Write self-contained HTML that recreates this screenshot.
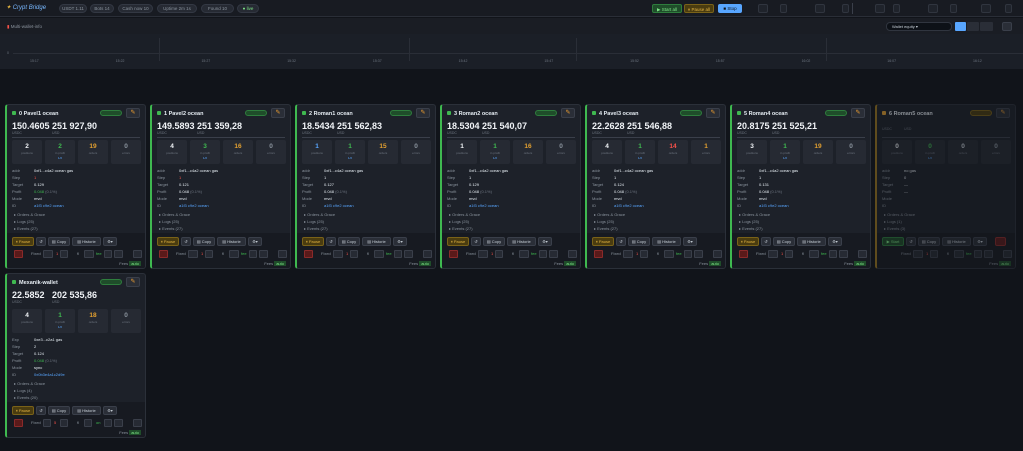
<!DOCTYPE html>
<html><head><meta charset="utf-8"><style>
*{box-sizing:border-box;margin:0;padding:0}
body{width:1023px;height:451px;background:#11141a;font-family:"Liberation Sans",sans-serif;color:#c9d1d9;position:relative;overflow:hidden;font-size:5px}
.top{position:absolute;left:0;top:0;width:1023px;height:17px;background:#181b22;border-bottom:1px solid #2a2e37}
.abs{position:absolute}
.pill{position:absolute;top:4px;height:9px;border-radius:5px;background:#262a33;border:1px solid #333843;color:#8b949e;font-size:4.5px;line-height:7px;text-align:center}
.tb{position:absolute;top:4px;height:9px;border-radius:2px;font-size:4.5px;line-height:9px;text-align:center}
.inp{position:absolute;top:4px;height:9px;background:#1f232b;border:1px solid #30353f;border-radius:2px}
.bar2{position:absolute;left:0;top:18px;width:1023px;height:16px;background:#1a1d24}
.chart{position:absolute;left:0;top:34px;width:1023px;height:35px;background:#1b1f27}
.card{position:absolute;width:141px;height:165px;background:#1d2129;border:1px solid #2b3039;border-left:2px solid #3fb950;border-radius:3px;overflow:hidden}
.card.off{border-left-color:#a07a20;opacity:.55}
.hd{position:absolute;left:5px;top:6px;font-size:5.5px;color:#e6edf3;font-weight:bold}
.hd i{display:inline-block;width:4px;height:4px;background:#3fb950;border-radius:1px;margin-right:3px}
.badge{position:absolute;right:23px;top:5px;width:22px;height:6px;border-radius:3px;background:#1f4d2a;border:1px solid #2e7d3d}
.edit{position:absolute;right:5px;top:3px;width:14px;height:10px;background:#2a2e37;border:1px solid #3a3f4a;border-radius:2px;color:#f0a030;font-size:6px;line-height:9px;text-align:center}
.big{position:absolute;top:16px;font-size:9px;font-weight:bold;color:#f0f3f6}
.lbl{position:absolute;top:26px;font-size:3.5px;color:#6e7681}
.div{position:absolute;left:5px;right:5px;top:32px;height:1px;background:#3a3f4a}
.st{position:absolute;top:35px;width:30px;height:24px;background:#262a33;border-radius:2px;text-align:center}
.st b{display:block;font-size:6.5px;margin-top:3px}
.st s{display:block;text-decoration:none;font-size:3px;color:#6e7681;margin-top:1px}
.st u{display:block;text-decoration:none;font-size:3px;color:#58a6ff;margin-top:1px}
.inf{position:absolute;left:5px;font-size:4px;color:#8b949e;line-height:7px}
.inf span{position:absolute;left:22px;white-space:nowrap}
.det{position:absolute;left:7px;font-size:4px;color:#8b949e}
.bot{position:absolute;left:0;right:0;top:128px;bottom:0;background:#171a21}
.bt{position:absolute;top:4px;height:9px;background:#2a2e37;border:1px solid #3a3f4a;border-radius:2px;font-size:4px;line-height:7px;text-align:center;color:#c9d1d9}
.bt.y{background:#4a3c10;border-color:#7a6218;color:#e3b341}
.bt.g{background:#1f4d2a;border-color:#2e7d3d;color:#7ee787}
.bt.r{background:#5a1a1a;border-color:#8a2a2a}
.cr{position:absolute;top:17px;height:8px;background:#262a33;border:1px solid #3a3f4a;border-radius:1px}
.ct{position:absolute;top:18px;font-size:4px;color:#8b949e}
.fee{position:absolute;right:4px;top:28px;font-size:4px;color:#8b949e}
.fee b{background:#1f4d2a;color:#7ee787;padding:0 2px;font-weight:normal}
</style></head><body>
<div class="top">
<div class="abs" style="left:6px;top:4px;font-size:6px;color:#79b8ff;font-style:italic"><span style="color:#e3b341">✦</span> Crypt Bridge</div>
<div class="pill" style="left:59px;width:28px">USDT 1.11</div>
<div class="pill" style="left:90px;width:24px">Bots 14</div>
<div class="pill" style="left:118px;width:35px">Cash now 10</div>
<div class="pill" style="left:157px;width:40px">Uptime 2m 1s</div>
<div class="pill" style="left:201px;width:33px">Found 10</div>
<div class="pill" style="left:237px;width:22px;color:#7ee787">● live</div>
<div class="tb" style="left:652px;width:30px;background:#1f4d2a;border:1px solid #2e7d3d;color:#7ee787">▶ Start all</div>
<div class="tb" style="left:684px;width:30px;background:#4a3c10;border:1px solid #7a6218;color:#e3b341">⏸ Pause all</div>
<div class="tb" style="left:718px;width:24px;background:#58a6ff;color:#0d1117">■ Stop</div>
<div class="inp" style="left:758px;width:10px"></div><div class="inp" style="left:780px;width:7px"></div>
<div class="inp" style="left:815px;width:10px"></div><div class="inp" style="left:842px;width:7px"></div>
<div class="abs" style="left:852px;top:3px;width:1px;height:11px;background:#3a3f4a"></div>
<div class="inp" style="left:875px;width:10px"></div><div class="inp" style="left:893px;width:7px"></div>
<div class="inp" style="left:928px;width:10px"></div><div class="inp" style="left:950px;width:7px"></div>
<div class="inp" style="left:981px;width:10px"></div><div class="inp" style="left:1005px;width:7px"></div>
</div>
<div class="bar2">
<div class="abs" style="left:7px;top:6px;font-size:4.5px;color:#8b949e"><span style="color:#f85149">▮</span> Multi-wallet-info</div>
<div class="abs" style="left:886px;top:4px;width:66px;height:9px;background:#0d1117;border:1px solid #30353f;border-radius:4px;font-size:4px;color:#c9d1d9;line-height:7px;padding-left:5px">Wallet equity ▾</div>
<div class="abs" style="left:955px;top:4px;width:11px;height:9px;background:#58a6ff;border-radius:1px"></div>
<div class="abs" style="left:967px;top:4px;width:12px;height:9px;background:#2a2e37;border-radius:1px"></div>
<div class="abs" style="left:980px;top:4px;width:13px;height:9px;background:#2a2e37;border-radius:1px"></div>
<div class="abs" style="left:1002px;top:4px;width:10px;height:9px;background:#2a2e37;border:1px solid #3a3f4a;border-radius:2px"></div>
</div>
<div class="chart">
<div class="abs" style="left:13px;top:19px;width:1010px;height:1px;background:#2a2e37"></div>
<div class="abs" style="left:159px;top:4px;width:1px;height:23px;background:#2a2e37"></div>
<div class="abs" style="left:409px;top:4px;width:1px;height:23px;background:#2a2e37"></div>
<div class="abs" style="left:576px;top:4px;width:1px;height:23px;background:#2a2e37"></div>
<div class="abs" style="left:826px;top:4px;width:1px;height:23px;background:#2a2e37"></div>
<div class="abs" style="left:7px;top:17px;font-size:3.5px;color:#6e7681">0</div>
<div class="abs" style="left:30px;top:25px;width:1000px;font-size:3.5px;color:#6e7681;word-spacing:76px">15:17 15:22 15:27 15:32 15:37 15:42 15:47 15:52 15:57 16:02 16:07 16:12</div>
</div>

<!-- cards -->
<div class="card" style="left:5px;top:104px">
<div class="hd"><i></i>0 Pavel1 ocean</div><div class="badge"></div><div class="edit">✎</div>
<div class="big" style="left:5px">150.4605</div><div class="big" style="left:45px">251 927,90</div>
<div class="lbl" style="left:5px">USDC</div><div class="lbl" style="left:45px">USD</div><div class="div"></div>
<div class="st" style="left:5px"><b style="color:#f0f3f6">2</b><s>positions</s></div>
<div class="st" style="left:38px"><b style="color:#3fb950">2</b><s>in profit</s><u>1/2</u></div>
<div class="st" style="left:71px"><b style="color:#e3a030">19</b><s>orders</s></div>
<div class="st" style="left:104px"><b style="color:#8b949e">0</b><s>errors</s></div>
<div class="inf" style="top:62px">addr<span style="color:#e6edf3">0xf1...c4a2 ocean gas</span></div>
<div class="inf" style="top:69px">Step<span style="color:#f85149">1</span></div>
<div class="inf" style="top:76px">Target<span style="color:#e6edf3">0.129</span></div>
<div class="inf" style="top:83px">Profit<span style="color:#3fb950">0.048 <font color="#6e7681">(0.1%)</font></span></div>
<div class="inf" style="top:90px">Mode<span style="color:#e6edf3">mvd</span></div>
<div class="inf" style="top:97px">ID<span style="color:#58a6ff">a1f3 c9e2 ocean</span></div>
<div class="det" style="top:107px">▸ Orders &amp; Grace</div><div class="det" style="top:114px">▸ Logs (25)</div><div class="det" style="top:121px">▸ Events (27)</div>
<div class="bot"><div class="bt y" style="left:5px;width:22px">⏸ Pause</div><div class="bt" style="left:29px;width:10px">↺</div><div class="bt" style="left:41px;width:22px">▤ Copy</div><div class="bt" style="left:65px;width:29px">▤ Historie</div><div class="bt" style="left:96px;width:14px">⚙▾</div>
<div class="cr" style="left:7px;width:9px;background:#5a1a1a;border-color:#8a2a2a"></div><div class="ct" style="left:24px">Fixed</div><div class="cr" style="left:36px;width:10px"></div><div class="ct" style="left:49px;color:#f85149">1</div><div class="cr" style="left:53px;width:8px"></div><div class="ct" style="left:70px">fl</div><div class="cr" style="left:77px;width:10px"></div><div class="ct" style="left:89px;color:#3fb950">fee</div><div class="cr" style="left:97px;width:8px"></div><div class="cr" style="left:107px;width:9px"></div><div class="cr" style="left:126px;width:9px"></div>
<div class="fee">Fees <b>auto</b></div></div>
</div>

<div class="card" style="left:150px;top:104px">
<div class="hd"><i></i>1 Pavel2 ocean</div><div class="badge"></div><div class="edit">✎</div>
<div class="big" style="left:5px">149.5893</div><div class="big" style="left:45px">251 359,28</div>
<div class="lbl" style="left:5px">USDC</div><div class="lbl" style="left:45px">USD</div><div class="div"></div>
<div class="st" style="left:5px"><b style="color:#f0f3f6">4</b><s>positions</s></div>
<div class="st" style="left:38px"><b style="color:#3fb950">3</b><s>in profit</s><u>1/2</u></div>
<div class="st" style="left:71px"><b style="color:#e3a030">16</b><s>orders</s></div>
<div class="st" style="left:104px"><b style="color:#8b949e">0</b><s>errors</s></div>
<div class="inf" style="top:62px">addr<span style="color:#e6edf3">0xf1...c4a2 ocean gas</span></div>
<div class="inf" style="top:69px">Step<span style="color:#f85149">1</span></div>
<div class="inf" style="top:76px">Target<span style="color:#e6edf3">0.121</span></div>
<div class="inf" style="top:83px">Profit<span style="color:#e6edf3">0.048 <font color="#6e7681">(0.1%)</font></span></div>
<div class="inf" style="top:90px">Mode<span style="color:#e6edf3">mvd</span></div>
<div class="inf" style="top:97px">ID<span style="color:#58a6ff">a1f3 c9e2 ocean</span></div>
<div class="det" style="top:107px">▸ Orders &amp; Grace</div><div class="det" style="top:114px">▸ Logs (25)</div><div class="det" style="top:121px">▸ Events (27)</div>
<div class="bot"><div class="bt y" style="left:5px;width:22px">⏸ Pause</div><div class="bt" style="left:29px;width:10px">↺</div><div class="bt" style="left:41px;width:22px">▤ Copy</div><div class="bt" style="left:65px;width:29px">▤ Historie</div><div class="bt" style="left:96px;width:14px">⚙▾</div>
<div class="cr" style="left:7px;width:9px;background:#5a1a1a;border-color:#8a2a2a"></div><div class="ct" style="left:24px">Fixed</div><div class="cr" style="left:36px;width:10px"></div><div class="ct" style="left:49px;color:#f85149">1</div><div class="cr" style="left:53px;width:8px"></div><div class="ct" style="left:70px">fl</div><div class="cr" style="left:77px;width:10px"></div><div class="ct" style="left:89px;color:#3fb950">fee</div><div class="cr" style="left:97px;width:8px"></div><div class="cr" style="left:107px;width:9px"></div><div class="cr" style="left:126px;width:9px"></div>
<div class="fee">Fees <b>auto</b></div></div>
</div>

<div class="card" style="left:295px;top:104px">
<div class="hd"><i></i>2 Roman1 ocean</div><div class="badge"></div><div class="edit">✎</div>
<div class="big" style="left:5px">18.5434</div><div class="big" style="left:40px">251 562,83</div>
<div class="lbl" style="left:5px">USDC</div><div class="lbl" style="left:40px">USD</div><div class="div"></div>
<div class="st" style="left:5px"><b style="color:#58a6ff">1</b><s>positions</s></div>
<div class="st" style="left:38px"><b style="color:#3fb950">1</b><s>in profit</s><u>1/2</u></div>
<div class="st" style="left:71px"><b style="color:#e3a030">15</b><s>orders</s></div>
<div class="st" style="left:104px"><b style="color:#8b949e">0</b><s>errors</s></div>
<div class="inf" style="top:62px">addr<span style="color:#e6edf3">0xf1...c4a2 ocean gas</span></div>
<div class="inf" style="top:69px">Step<span style="color:#e6edf3">1</span></div>
<div class="inf" style="top:76px">Target<span style="color:#e6edf3">0.127</span></div>
<div class="inf" style="top:83px">Profit<span style="color:#e6edf3">0.048 <font color="#6e7681">(0.1%)</font></span></div>
<div class="inf" style="top:90px">Mode<span style="color:#e6edf3">mvd</span></div>
<div class="inf" style="top:97px">ID<span style="color:#58a6ff">a1f3 c9e2 ocean</span></div>
<div class="det" style="top:107px">▸ Orders &amp; Grace</div><div class="det" style="top:114px">▸ Logs (25)</div><div class="det" style="top:121px">▸ Events (27)</div>
<div class="bot"><div class="bt y" style="left:5px;width:22px">⏸ Pause</div><div class="bt" style="left:29px;width:10px">↺</div><div class="bt" style="left:41px;width:22px">▤ Copy</div><div class="bt" style="left:65px;width:29px">▤ Historie</div><div class="bt" style="left:96px;width:14px">⚙▾</div>
<div class="cr" style="left:7px;width:9px;background:#5a1a1a;border-color:#8a2a2a"></div><div class="ct" style="left:24px">Fixed</div><div class="cr" style="left:36px;width:10px"></div><div class="ct" style="left:49px;color:#f85149">1</div><div class="cr" style="left:53px;width:8px"></div><div class="ct" style="left:70px">fl</div><div class="cr" style="left:77px;width:10px"></div><div class="ct" style="left:89px;color:#3fb950">fee</div><div class="cr" style="left:97px;width:8px"></div><div class="cr" style="left:107px;width:9px"></div><div class="cr" style="left:126px;width:9px"></div>
<div class="fee">Fees <b>auto</b></div></div>
</div>

<div class="card" style="left:440px;top:104px">
<div class="hd"><i></i>3 Roman2 ocean</div><div class="badge"></div><div class="edit">✎</div>
<div class="big" style="left:5px">18.5304</div><div class="big" style="left:40px">251 540,07</div>
<div class="lbl" style="left:5px">USDC</div><div class="lbl" style="left:40px">USD</div><div class="div"></div>
<div class="st" style="left:5px"><b style="color:#f0f3f6">1</b><s>positions</s></div>
<div class="st" style="left:38px"><b style="color:#3fb950">1</b><s>in profit</s><u>1/2</u></div>
<div class="st" style="left:71px"><b style="color:#e3a030">16</b><s>orders</s></div>
<div class="st" style="left:104px"><b style="color:#8b949e">0</b><s>errors</s></div>
<div class="inf" style="top:62px">addr<span style="color:#e6edf3">0xf1...c4a2 ocean gas</span></div>
<div class="inf" style="top:69px">Step<span style="color:#e6edf3">1</span></div>
<div class="inf" style="top:76px">Target<span style="color:#e6edf3">0.129</span></div>
<div class="inf" style="top:83px">Profit<span style="color:#e6edf3">0.048 <font color="#6e7681">(0.1%)</font></span></div>
<div class="inf" style="top:90px">Mode<span style="color:#e6edf3">mvd</span></div>
<div class="inf" style="top:97px">ID<span style="color:#58a6ff">a1f3 c9e2 ocean</span></div>
<div class="det" style="top:107px">▸ Orders &amp; Grace</div><div class="det" style="top:114px">▸ Logs (25)</div><div class="det" style="top:121px">▸ Events (27)</div>
<div class="bot"><div class="bt y" style="left:5px;width:22px">⏸ Pause</div><div class="bt" style="left:29px;width:10px">↺</div><div class="bt" style="left:41px;width:22px">▤ Copy</div><div class="bt" style="left:65px;width:29px">▤ Historie</div><div class="bt" style="left:96px;width:14px">⚙▾</div>
<div class="cr" style="left:7px;width:9px;background:#5a1a1a;border-color:#8a2a2a"></div><div class="ct" style="left:24px">Fixed</div><div class="cr" style="left:36px;width:10px"></div><div class="ct" style="left:49px;color:#f85149">1</div><div class="cr" style="left:53px;width:8px"></div><div class="ct" style="left:70px">fl</div><div class="cr" style="left:77px;width:10px"></div><div class="ct" style="left:89px;color:#3fb950">fee</div><div class="cr" style="left:97px;width:8px"></div><div class="cr" style="left:107px;width:9px"></div><div class="cr" style="left:126px;width:9px"></div>
<div class="fee">Fees <b>auto</b></div></div>
</div>

<div class="card" style="left:585px;top:104px">
<div class="hd"><i></i>4 Pavel3 ocean</div><div class="badge"></div><div class="edit">✎</div>
<div class="big" style="left:5px">22.2628</div><div class="big" style="left:40px">251 546,88</div>
<div class="lbl" style="left:5px">USDC</div><div class="lbl" style="left:40px">USD</div><div class="div"></div>
<div class="st" style="left:5px"><b style="color:#f0f3f6">4</b><s>positions</s></div>
<div class="st" style="left:38px"><b style="color:#3fb950">1</b><s>in profit</s><u>1/2</u></div>
<div class="st" style="left:71px"><b style="color:#f85149">14</b><s>orders</s></div>
<div class="st" style="left:104px"><b style="color:#e3a030">1</b><s>errors</s></div>
<div class="inf" style="top:62px">addr<span style="color:#e6edf3">0xf1...c4a2 ocean gas</span></div>
<div class="inf" style="top:69px">Step<span style="color:#e6edf3">1</span></div>
<div class="inf" style="top:76px">Target<span style="color:#e6edf3">0.124</span></div>
<div class="inf" style="top:83px">Profit<span style="color:#e6edf3">0.048 <font color="#6e7681">(0.1%)</font></span></div>
<div class="inf" style="top:90px">Mode<span style="color:#e6edf3">mvd</span></div>
<div class="inf" style="top:97px">ID<span style="color:#58a6ff">a1f3 c9e2 ocean</span></div>
<div class="det" style="top:107px">▸ Orders &amp; Grace</div><div class="det" style="top:114px">▸ Logs (25)</div><div class="det" style="top:121px">▸ Events (27)</div>
<div class="bot"><div class="bt y" style="left:5px;width:22px">⏸ Pause</div><div class="bt" style="left:29px;width:10px">↺</div><div class="bt" style="left:41px;width:22px">▤ Copy</div><div class="bt" style="left:65px;width:29px">▤ Historie</div><div class="bt" style="left:96px;width:14px">⚙▾</div>
<div class="cr" style="left:7px;width:9px;background:#5a1a1a;border-color:#8a2a2a"></div><div class="ct" style="left:24px">Fixed</div><div class="cr" style="left:36px;width:10px"></div><div class="ct" style="left:49px;color:#f85149">1</div><div class="cr" style="left:53px;width:8px"></div><div class="ct" style="left:70px">fl</div><div class="cr" style="left:77px;width:10px"></div><div class="ct" style="left:89px;color:#3fb950">fee</div><div class="cr" style="left:97px;width:8px"></div><div class="cr" style="left:107px;width:9px"></div><div class="cr" style="left:126px;width:9px"></div>
<div class="fee">Fees <b>auto</b></div></div>
</div>

<div class="card" style="left:730px;top:104px">
<div class="hd"><i></i>5 Roman4 ocean</div><div class="badge"></div><div class="edit">✎</div>
<div class="big" style="left:5px">20.8175</div><div class="big" style="left:40px">251 525,21</div>
<div class="lbl" style="left:5px">USDC</div><div class="lbl" style="left:40px">USD</div><div class="div"></div>
<div class="st" style="left:5px"><b style="color:#f0f3f6">3</b><s>positions</s></div>
<div class="st" style="left:38px"><b style="color:#3fb950">1</b><s>in profit</s><u>1/2</u></div>
<div class="st" style="left:71px"><b style="color:#e3a030">19</b><s>orders</s></div>
<div class="st" style="left:104px"><b style="color:#8b949e">0</b><s>errors</s></div>
<div class="inf" style="top:62px">addr<span style="color:#e6edf3">0xf1...c4a2 ocean gas</span></div>
<div class="inf" style="top:69px">Step<span style="color:#e6edf3">1</span></div>
<div class="inf" style="top:76px">Target<span style="color:#e6edf3">0.131</span></div>
<div class="inf" style="top:83px">Profit<span style="color:#e6edf3">0.048 <font color="#6e7681">(0.1%)</font></span></div>
<div class="inf" style="top:90px">Mode<span style="color:#e6edf3">mvd</span></div>
<div class="inf" style="top:97px">ID<span style="color:#58a6ff">a1f3 c9e2 ocean</span></div>
<div class="det" style="top:107px">▸ Orders &amp; Grace</div><div class="det" style="top:114px">▸ Logs (25)</div><div class="det" style="top:121px">▸ Events (27)</div>
<div class="bot"><div class="bt y" style="left:5px;width:22px">⏸ Pause</div><div class="bt" style="left:29px;width:10px">↺</div><div class="bt" style="left:41px;width:22px">▤ Copy</div><div class="bt" style="left:65px;width:29px">▤ Historie</div><div class="bt" style="left:96px;width:14px">⚙▾</div>
<div class="cr" style="left:7px;width:9px;background:#5a1a1a;border-color:#8a2a2a"></div><div class="ct" style="left:24px">Fixed</div><div class="cr" style="left:36px;width:10px"></div><div class="ct" style="left:49px;color:#f85149">1</div><div class="cr" style="left:53px;width:8px"></div><div class="ct" style="left:70px">fl</div><div class="cr" style="left:77px;width:10px"></div><div class="ct" style="left:89px;color:#3fb950">fee</div><div class="cr" style="left:97px;width:8px"></div><div class="cr" style="left:107px;width:9px"></div><div class="cr" style="left:126px;width:9px"></div>
<div class="fee">Fees <b>auto</b></div></div>
</div>

<div class="card off" style="left:875px;top:104px">
<div class="hd"><i style="background:#e3a030"></i>6 Roman5 ocean</div><div class="badge" style="background:#4a3c10;border-color:#7a6218"></div><div class="edit">✎</div>
<div class="lbl" style="left:5px;top:22px">USDC</div><div class="lbl" style="left:27px;top:22px">USD</div><div class="div"></div>
<div class="st" style="left:5px"><b style="color:#f0f3f6">0</b><s>positions</s></div>
<div class="st" style="left:38px"><b style="color:#3fb950">0</b><s>in profit</s><u>1/2</u></div>
<div class="st" style="left:71px"><b style="color:#c9d1d9">0</b><s>orders</s></div>
<div class="st" style="left:104px"><b style="color:#8b949e">0</b><s>errors</s></div>
<div class="inf" style="top:62px">addr<span style="color:#e6edf3">no gas</span></div>
<div class="inf" style="top:69px">Step<span style="color:#e6edf3">0</span></div>
<div class="inf" style="top:76px">Target<span style="color:#e6edf3">—</span></div>
<div class="inf" style="top:83px">Profit<span style="color:#e6edf3">—</span></div>
<div class="inf" style="top:90px">Mode<span></span></div>
<div class="inf" style="top:97px">ID<span></span></div>
<div class="det" style="top:107px">▸ Orders &amp; Grace</div><div class="det" style="top:114px">▸ Logs (1)</div><div class="det" style="top:121px">▸ Events (3)</div>
<div class="bot"><div class="bt g" style="left:5px;width:22px">▶ Start</div><div class="bt" style="left:29px;width:10px">↺</div><div class="bt" style="left:41px;width:22px">▤ Copy</div><div class="bt" style="left:65px;width:29px">▤ Historie</div><div class="bt" style="left:96px;width:14px">⚙▾</div><div class="bt r" style="left:118px;width:11px"></div>
<div class="ct" style="left:24px">Fixed</div><div class="cr" style="left:36px;width:10px"></div><div class="ct" style="left:49px;color:#f85149">1</div><div class="cr" style="left:53px;width:8px"></div><div class="ct" style="left:70px">fl</div><div class="cr" style="left:77px;width:10px"></div><div class="ct" style="left:89px;color:#3fb950">fee</div><div class="cr" style="left:97px;width:8px"></div><div class="cr" style="left:107px;width:9px"></div><div class="cr" style="left:126px;width:9px"></div>
<div class="fee">Fees <b>auto</b></div></div>
</div>

<div class="card" style="left:5px;top:273px">
<div class="hd"><i></i>Mexanik-wallet</div><div class="badge"></div><div class="edit">✎</div>
<div class="big" style="left:5px">22.5852</div><div class="big" style="left:45px">202 535,86</div>
<div class="lbl" style="left:5px">USDC</div><div class="lbl" style="left:45px">USD</div>
<div class="st" style="left:5px"><b style="color:#f0f3f6">4</b><s>positions</s></div>
<div class="st" style="left:38px"><b style="color:#3fb950">1</b><s>in profit</s><u>1/2</u></div>
<div class="st" style="left:71px"><b style="color:#e3a030">18</b><s>orders</s></div>
<div class="st" style="left:104px"><b style="color:#8b949e">0</b><s>errors</s></div>
<div class="inf" style="top:62px">Exp<span style="color:#e6edf3">0xe3...c2a1 gas</span></div>
<div class="inf" style="top:69px">Step<span style="color:#e6edf3">2</span></div>
<div class="inf" style="top:76px">Target<span style="color:#e6edf3">0.124</span></div>
<div class="inf" style="top:83px">Profit<span style="color:#3fb950">0.048 <font color="#6e7681">(0.1%)</font></span></div>
<div class="inf" style="top:90px">Mode<span style="color:#e6edf3">sync</span></div>
<div class="inf" style="top:97px">ID<span style="color:#58a6ff">0x0b3e4a1c2d9e</span></div>
<div class="det" style="top:107px">▸ Orders &amp; Grace</div><div class="det" style="top:114px">▸ Logs (4)</div><div class="det" style="top:121px">▸ Events (20)</div>
<div class="bot"><div class="bt y" style="left:5px;width:22px">⏸ Pause</div><div class="bt" style="left:29px;width:10px">↺</div><div class="bt" style="left:41px;width:22px">▤ Copy</div><div class="bt" style="left:65px;width:29px">▤ Historie</div><div class="bt" style="left:96px;width:14px">⚙▾</div>
<div class="cr" style="left:7px;width:9px;background:#5a1a1a;border-color:#8a2a2a"></div><div class="ct" style="left:24px">Fixed</div><div class="cr" style="left:36px;width:8px"></div><div class="ct" style="left:47px;color:#f85149">5</div><div class="cr" style="left:53px;width:8px"></div><div class="ct" style="left:70px">fl</div><div class="cr" style="left:77px;width:8px"></div><div class="ct" style="left:89px;color:#3fb950">on</div><div class="cr" style="left:97px;width:8px"></div><div class="cr" style="left:107px;width:9px"></div><div class="cr" style="left:126px;width:9px"></div>
<div class="fee">Fees <b>auto</b></div></div>
</div>
</body></html>
